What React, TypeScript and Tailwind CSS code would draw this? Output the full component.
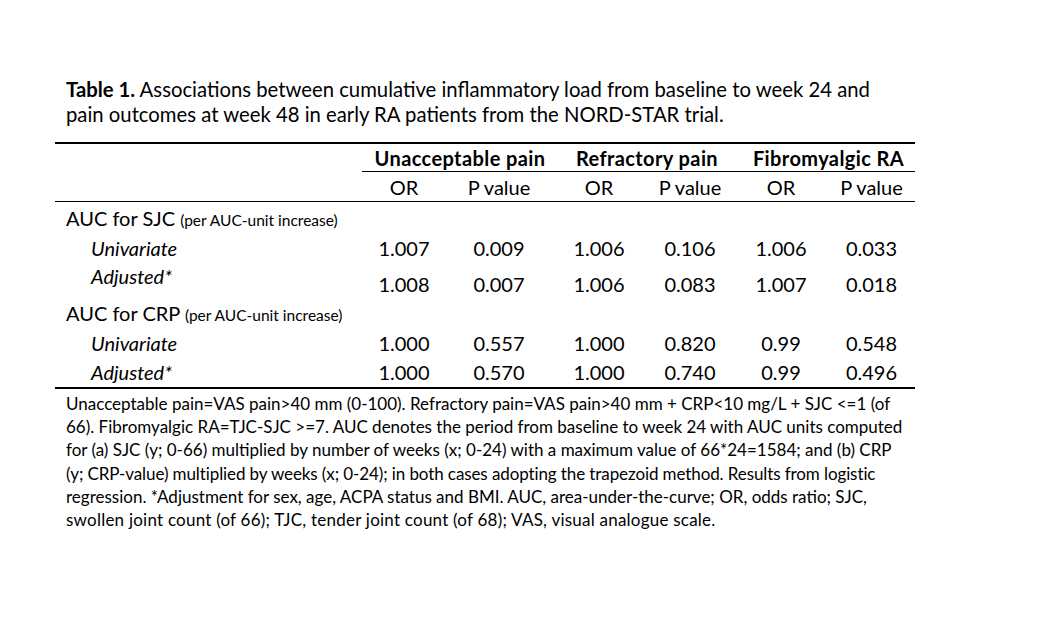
const cols = "grid grid-cols-[307px_84px_106px_94px_88px_94px_87px]";

type Row = {
  label: string;
  vals: string[];
  h: string;
  tall?: boolean;
};

function Cells({ vals }: { vals: string[] }) {
  return (
    <>
      {vals.map((v, i) => (
        <div key={i} className="text-center">
          {v}
        </div>
      ))}
    </>
  );
}

export default function App() {
  const sjc: Row[] = [
    { label: "Univariate", vals: ["1.007", "0.009", "1.006", "0.106", "1.006", "0.033"], h: "h-[25px]" },
    { label: "Adjusted*", vals: ["1.008", "0.007", "1.006", "0.083", "1.007", "0.018"], h: "h-[39px]", tall: true },
  ];
  const crp: Row[] = [
    { label: "Univariate", vals: ["1.000", "0.557", "1.000", "0.820", "0.99", "0.548"], h: "h-[29px]" },
    { label: "Adjusted*", vals: ["1.000", "0.570", "1.000", "0.740", "0.99", "0.496"], h: "h-[30px]" },
  ];

  const renderRow = (r: Row, key: string) => (
    <div key={key} className={`${cols} ${r.h} ${r.tall ? "items-end pb-[5px]" : "items-center"}`}>
      <div className={`pl-[36px] italic ${r.tall ? "self-start pt-[6px]" : ""}`}>{r.label}</div>
      <Cells vals={r.vals} />
    </div>
  );

  return (
    <div className="h-[625px] w-[1042px] bg-white text-black font-['Lato',sans-serif] leading-none">
      <div className="pl-[55px] pt-[77px]">
        <div className="pl-[11px] text-[20.3px] leading-[25px] w-[870px] whitespace-nowrap">
          <span className="font-bold">Table 1.</span> Associations between cumulative inflammatory load from baseline to week 24 and
          <br />
          pain outcomes at week 48 in early RA patients from the NORD-STAR trial.
        </div>

        <div className="mt-[15px] w-[860px] border-t-2 border-black text-[20px]">
          <div className="grid grid-cols-[307px_553px] h-[28px]">
            <div />
            <div className="grid grid-cols-[190px_182px_181px] items-center border-b border-black font-bold tracking-[0.4px]">
              <div className="text-center pl-[6px]">Unacceptable pain</div>
              <div className="text-center pl-[8px]">Refractory pain</div>
              <div className="text-center pl-[8px]">Fibromyalgic RA</div>
            </div>
          </div>
          <div className={`${cols} h-[30px] items-center border-b border-black`}>
            <div />
            <Cells vals={["OR", "P value", "OR", "P value", "OR", "P value"]} />
          </div>

          <div className={`${cols} h-[33px] items-center`}>
            <div className="col-span-7 pl-[11px]">
              AUC for SJC <span className="text-[15.5px]">(per AUC-unit increase)</span>
            </div>
          </div>
          {sjc.map((r, i) => renderRow(r, "s" + i))}

          <div className={`${cols} h-[29px] items-center`}>
            <div className="col-span-7 pl-[11px]">
              AUC for CRP <span className="text-[15.5px]">(per AUC-unit increase)</span>
            </div>
          </div>
          {crp.map((r, i) => renderRow(r, "c" + i))}
        </div>

        <div className="w-[860px] border-t-2 border-black pl-[11px] pt-[3px] text-[17px] leading-[23.2px] whitespace-nowrap">
          Unacceptable pain=VAS pain&gt;40 mm (0-100). Refractory pain=VAS pain&gt;40 mm + CRP&lt;10 mg/L + SJC &lt;=1 (of
          <br />
          66). Fibromyalgic RA=TJC-SJC &gt;=7. AUC denotes the period from baseline to week 24 with AUC units computed
          <br />
          for (a) SJC (y; 0-66) multiplied by number of weeks (x; 0-24) with a maximum value of 66*24=1584; and (b) CRP
          <br />
          <span className="tracking-[-0.1px]">
            (y; CRP-value) multiplied by weeks (x; 0-24); in both cases adopting the trapezoid method. Results from logistic
          </span>
          <br />
          regression. *Adjustment for sex, age, ACPA status and BMI. AUC, area-under-the-curve; OR, odds ratio; SJC,
          <br />
          <span className="tracking-[0.23px]">
            swollen joint count (of 66); TJC, tender joint count (of 68); VAS, visual analogue scale.
          </span>
        </div>
      </div>
    </div>
  );
}
